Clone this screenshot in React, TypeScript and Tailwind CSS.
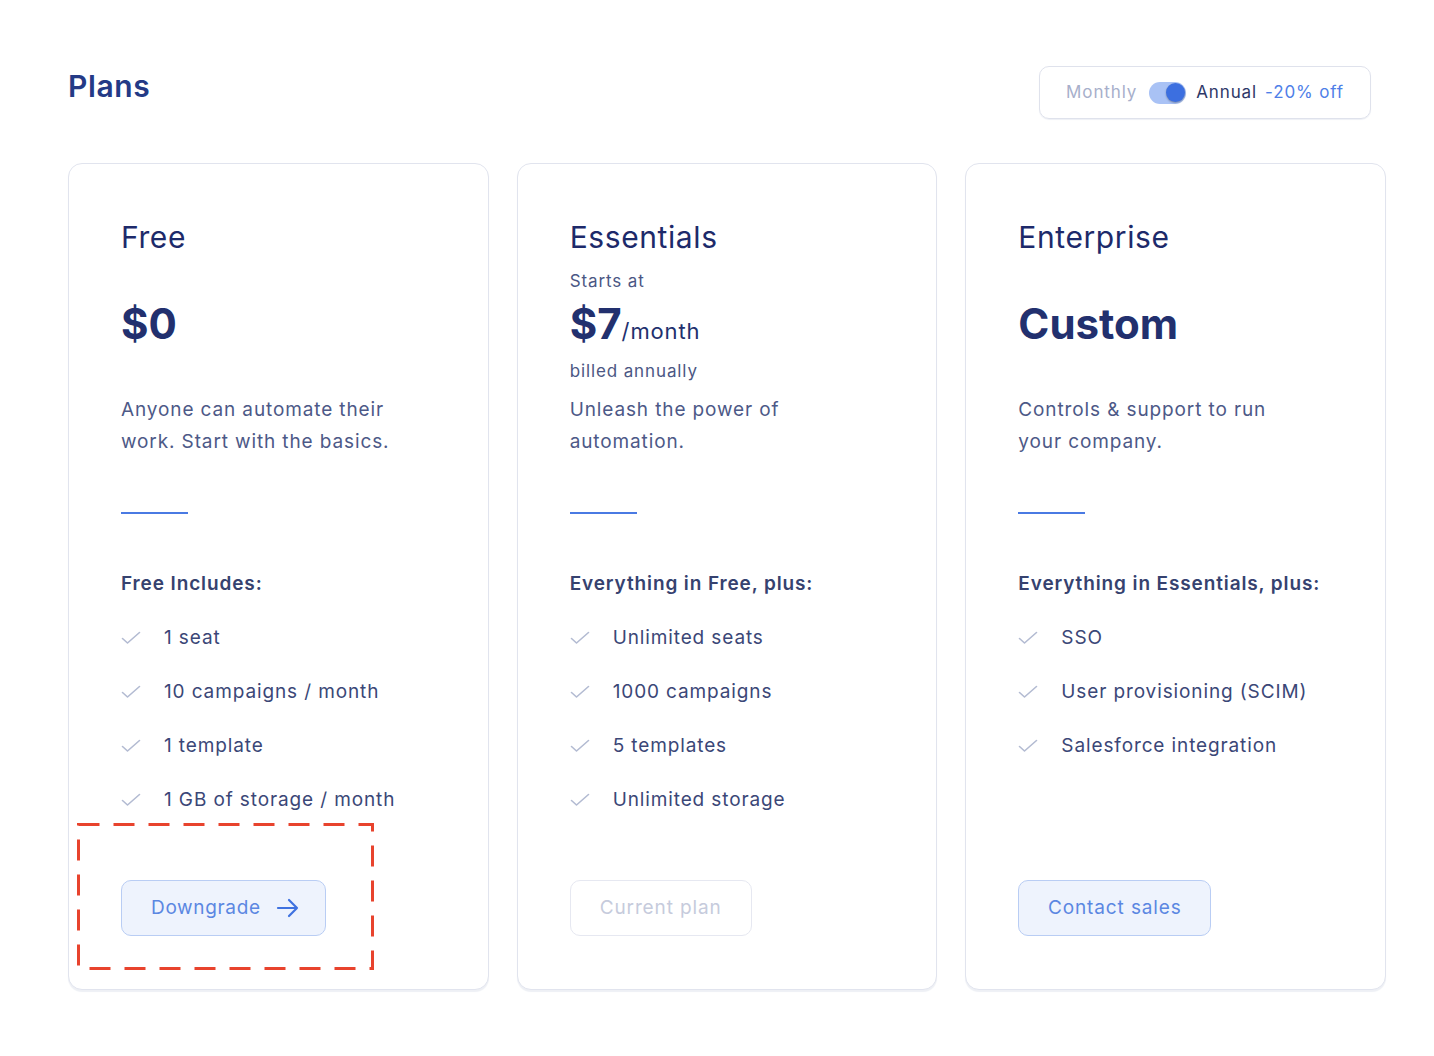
import React from "react";

type Plan = {
  name: string;
  startsAt?: boolean;
  price: string;
  unit?: string;
  description: string[];
  includesTitle: string;
  features: string[];
  button: "downgrade" | "current" | "contact";
};

const plans: Plan[] = [
  {
    name: "Free",
    price: "$0",
    description: ["Anyone can automate their", "work. Start with the basics."],
    includesTitle: "Free Includes:",
    features: ["1 seat", "10 campaigns / month", "1 template", "1 GB of storage / month"],
    button: "downgrade",
  },
  {
    name: "Essentials",
    startsAt: true,
    price: "$7",
    unit: "/month",
    description: ["Unleash the power of", "automation."],
    includesTitle: "Everything in Free, plus:",
    features: ["Unlimited seats", "1000 campaigns", "5 templates", "Unlimited storage"],
    button: "current",
  },
  {
    name: "Enterprise",
    price: "Custom",
    description: ["Controls & support to run", "your company."],
    includesTitle: "Everything in Essentials, plus:",
    features: ["SSO", "User provisioning (SCIM)", "Salesforce integration"],
    button: "contact",
  },
];

function Check() {
  return (
    <svg width="20" height="14" viewBox="0 0 20 14" fill="none" aria-hidden="true">
      <path d="M1.5 7.5 L6.5 12 L18.5 1.5" stroke="#b3bbd2" strokeWidth="1.6" strokeLinecap="round" strokeLinejoin="round" />
    </svg>
  );
}

function PlanButton({ kind }: { kind: Plan["button"] }) {
  if (kind === "downgrade") {
    return (
      <div className="relative w-fit">
        <button
          type="button"
          className="flex h-[56px] w-[205px] items-center gap-[15px] rounded-[10px] border border-[#b9cdf4] bg-[#eef3fd] pl-[29px] text-[19px] tracking-[0.035em] text-[#5b87e2]"
        >
          Downgrade
          <svg width="24" height="20" viewBox="0 0 24 20" fill="none" aria-hidden="true">
            <path d="M2 10 H21 M13 2 L21 10 L13 18" stroke="#3f72e0" strokeWidth="2.2" strokeLinecap="round" strokeLinejoin="round" />
          </svg>
        </button>
        <svg
          className="pointer-events-none absolute left-[-44px] top-[-57px]"
          width="297"
          height="147"
          viewBox="0 0 297 147"
          fill="none"
        >
          <rect x="1.5" y="1.5" width="294" height="144" stroke="#e8432d" strokeWidth="3" strokeDasharray="21 14" />
        </svg>
      </div>
    );
  }
  if (kind === "current") {
    return (
      <button
        type="button"
        className="flex h-[56px] w-[182px] items-center justify-center rounded-[10px] border border-[#e6e8f1] bg-white text-[19px] text-[#c6cbdc]"
      >
        Current plan
      </button>
    );
  }
  return (
    <button
      type="button"
      className="flex h-[56px] w-[193px] items-center justify-center rounded-[10px] border border-[#b9cdf4] bg-[#eef3fd] text-[19px] text-[#5b87e2]"
    >
      Contact sales
    </button>
  );
}

function PlanCard({ plan }: { plan: Plan }) {
  return (
    <div className="flex h-[827px] flex-col rounded-[14px] border border-[#e1e4ee] bg-white pb-[53px] pl-[52px] pt-[55px] shadow-[0_2px_1px_#eef0f5]">
      <h2 className="text-[30px] leading-[36px] tracking-[0.02em] text-[#1d2a6a]">{plan.name}</h2>
      <div className="flex h-[139px] flex-col">
        {plan.startsAt ? (
          <>
            <div className="mt-[14px] text-[17px] leading-[24px] text-[#4b5784]">Starts at</div>
            <div className="mt-[6px] flex h-[50px] items-baseline text-[#22306e]">
              <span className="text-[42px] font-bold leading-[50px] tracking-normal">{plan.price}</span>
              <span className="text-[22px]">{plan.unit}</span>
            </div>
            <div className="mt-[10px] text-[17px] leading-[24px] text-[#4b5784]">billed annually</div>
          </>
        ) : (
          <div className="mt-[44px] text-[42px] font-bold leading-[50px] tracking-normal text-[#22306e]">{plan.price}</div>
        )}
      </div>
      <div className="text-[19px] leading-[32px] text-[#4d5987]">
        {plan.description.map((line) => (
          <div key={line}>{line}</div>
        ))}
      </div>
      <div className="mt-[54px] h-[2px] w-[67px] bg-[#4a7ae3]" />
      <div className="mt-[56px] text-[19px] font-semibold leading-[28px] text-[#36426f]">{plan.includesTitle}</div>
      <ul className="mt-[26px] flex flex-col gap-[26px]">
        {plan.features.map((f) => (
          <li key={f} className="flex h-[28px] items-center text-[19px] text-[#3b4777]">
            <span className="w-[43px]">
              <Check />
            </span>
            {f}
          </li>
        ))}
      </ul>
      <div className="mt-auto">
        <PlanButton kind={plan.button} />
      </div>
    </div>
  );
}

export default function App() {
  return (
    <div
      className="min-h-screen bg-white pl-[68px] pr-[48px] pt-[66px] tracking-[0.055em]"
      style={{ fontFamily: "Inter, 'Liberation Sans', sans-serif" }}
    >
      <div className="flex items-start justify-between">
        <h1 className="mt-[2px] text-[30px] font-semibold leading-[36px] tracking-[0.02em] text-[#243a86]">Plans</h1>
        <div className="mr-[15px] flex h-[53px] items-center rounded-[10px] border border-[#dfe2ec] pl-[26px] pr-[26px] shadow-[0_1px_1px_#eef0f5]">
          <span className="text-[17px] text-[#a7afcb]">Monthly</span>
          <span className="ml-[12px] flex h-[22px] w-[37px] items-center justify-end rounded-full bg-[#a9c2f5] pr-[1px]">
            <span className="h-[19px] w-[19px] rounded-full bg-[#3c6fe0] shadow-[0_1px_2px_rgba(0,0,0,0.3)]" />
          </span>
          <span className="ml-[10px] text-[17px] text-[#2e3868]">Annual</span>
          <span className="ml-[8px] text-[17px] text-[#4f7fe8]">-20% off</span>
        </div>
      </div>
      <div className="mt-[44px] grid grid-cols-3 gap-[28px]">
        {plans.map((p) => (
          <PlanCard key={p.name} plan={p} />
        ))}
      </div>
    </div>
  );
}
